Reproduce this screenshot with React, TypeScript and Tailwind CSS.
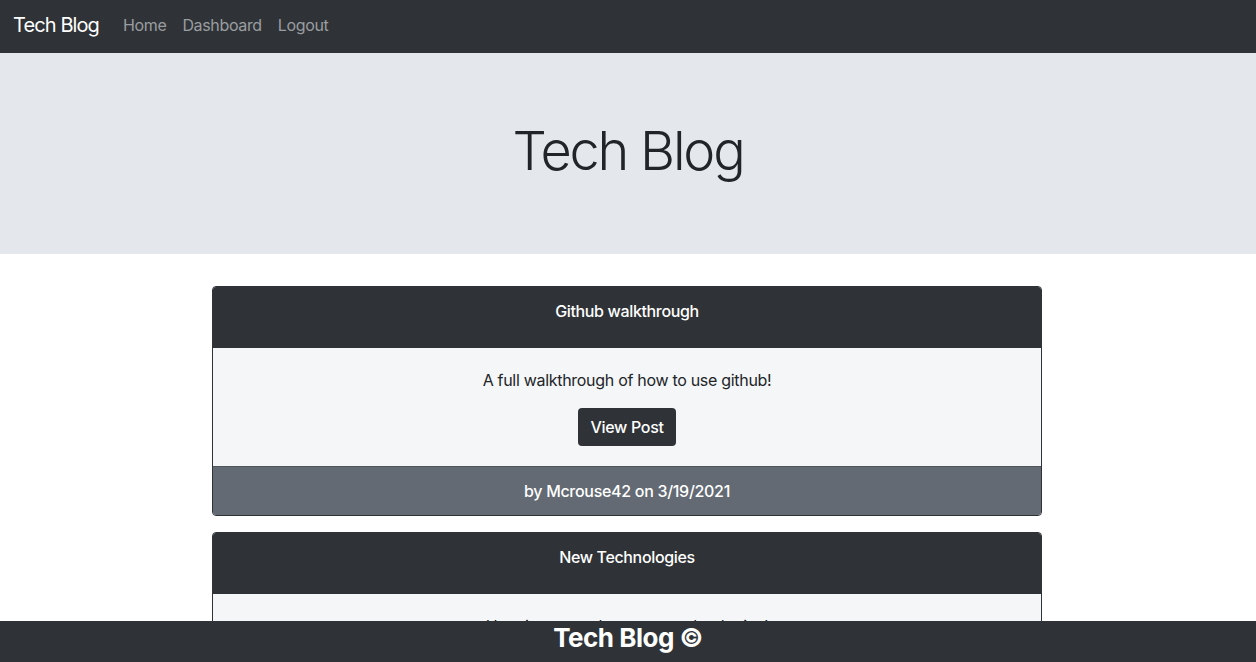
import React from "react";

interface Post {
  id: number;
  title: string;
  content: string;
  author: string;
  date: string;
}

const posts: Post[] = [
  {
    id: 1,
    title: "Github walkthrough",
    content: "A full walkthrough of how to use github!",
    author: "Mcrouse42",
    date: "3/19/2021",
  },
  {
    id: 2,
    title: "New Technologies",
    content: "Here is a post about new technologies!",
    author: "Mcrouse42",
    date: "3/20/2021",
  },
];

function PostCard({ post }: { post: Post }) {
  return (
    <div className="rounded-[4px] border border-[#2f3337] overflow-hidden">
      <div className="bg-[#2f3337] text-white text-center pt-[12px] pb-[25px] leading-6 text-base font-medium tracking-[-0.35px]">
        {post.title}
      </div>
      <div className="bg-[#f5f6f8] text-center py-5">
        <p className="text-[#212529] text-base leading-6 mb-4 tracking-[-0.3px]">{post.content}</p>
        <button className="bg-[#2f3337] text-white rounded-[4px] px-3 py-[7px] text-base leading-6 font-medium tracking-[-0.3px]">
          View Post
        </button>
      </div>
      <div className="bg-[#636a73] text-white text-center py-3 leading-6 text-base font-medium border-t border-[#4e545b] tracking-[-0.3px]">
        by {post.author} on {post.date}
      </div>
    </div>
  );
}

export default function App() {
  return (
    <div className="min-h-screen bg-white font-['Inter','Liberation_Sans',sans-serif]">
      <nav className="h-[53px] bg-[#2f3337] flex items-center px-[13px] pb-[4px]">
        <span className="text-white text-[20px] leading-none tracking-[-0.9px] mr-6">Tech Blog</span>
        <div className="flex gap-4 text-[16px] text-[#9a9da0] tracking-[-0.35px]">
          <a href="#">Home</a>
          <a href="#">Dashboard</a>
          <a href="#">Logout</a>
        </div>
      </nav>

      <header className="h-[201px] bg-[#e4e7eb] flex items-center justify-center pb-[6px]">
        <h1 className="text-[54px] font-light text-[#212529] tracking-[-2.2px] leading-none">Tech Blog</h1>
      </header>

      <main className="w-[830px] mx-auto mt-8 pb-16 flex flex-col gap-4 -translate-x-px">
        {posts.map((post) => (
          <PostCard key={post.id} post={post} />
        ))}
      </main>

      <footer className="fixed bottom-0 left-0 right-0 h-[41px] bg-[#2f3337] flex items-center justify-center pb-[8px]">
        <span className="text-white text-[26px] font-bold tracking-[-0.5px]">Tech Blog ©</span>
      </footer>
    </div>
  );
}
